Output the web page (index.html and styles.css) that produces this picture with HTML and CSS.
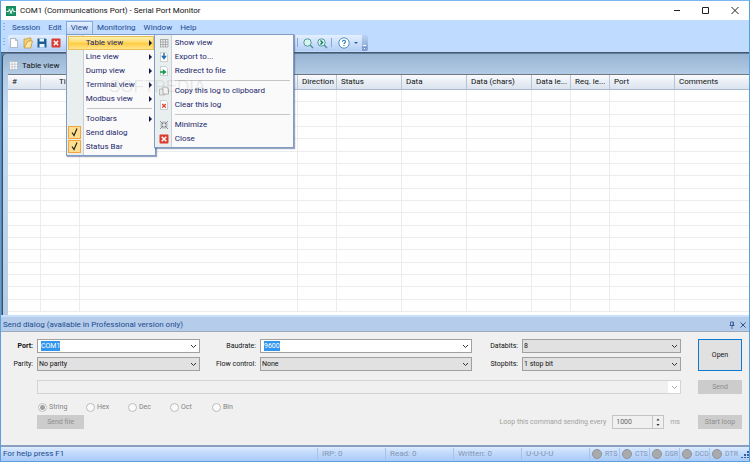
FILE: index.html
```html
<!doctype html>
<html lang="en">
  <head>
    <meta charset="UTF-8" />
    <meta name="viewport" content="width=device-width, initial-scale=1.0" />
    <title>COM1 (Communications Port) - Serial Port Monitor</title>
    <link rel="stylesheet" href="styles.css">
  </head>
  <body>
    <div class="window">
        <header class="titlebar">
            <svg class="app-icon" viewBox="0 0 20 20"><rect width="20" height="20" rx="1" fill="#138a5e"/><path d="M2 5h16M2 10h16M2 15h16M6 2v16M14 2v16" stroke="#3fae83" stroke-width="1"/><path d="M1 11h4l2-5 3 9 3-10 2 6h4" fill="none" stroke="#fff" stroke-width="2"/></svg>
            <h1>COM1 (Communications Port) - Serial Port Monitor</h1>
            <div class="window-buttons">
                <button type="button" aria-label="Minimize window"><svg viewBox="0 0 10 10"><path d="M2 4.500h6" stroke="#222"/></svg></button>
                <button type="button" aria-label="Maximize window"><svg viewBox="0 0 10 10"><path d="M1.500 1.500h6v6h-6z" fill="none" stroke="#222"/></svg></button>
                <button type="button" aria-label="Close window"><svg viewBox="0 0 10 10"><path d="M1.500 1l7 7M8.500 1l-7 7" stroke="#222"/></svg></button>
            </div>
        </header>

        <nav class="menubar">
            <span class="grip"></span>
            <button type="button" class="menu-title">Session</button>
            <button type="button" class="menu-title">Edit</button>
            <div class="menu-open">
                <button type="button" class="menu-title active">View</button>
                <div class="menu view-menu">
                    <div class="menu-row">
                        <button type="button" class="item parent selected">Table view</button>
                        <div class="menu sub-menu">
                            <button type="button" class="item"><svg viewBox="0 0 10 10"><path d="M1.500 1v8M4 1v8M6.500 1v8M9 1v8M1 1.500h8M1 4h8M1 6.500h8M1 9h8" stroke="#9a9a9a" stroke-width=".7"/></svg>Show view</button>
                            <button type="button" class="item"><svg viewBox="0 0 10 10"><path d="M1.500.5h5l2 2v7h-7z" fill="#fff" stroke="#a9b3bd" stroke-width=".6"/><path d="M5 1v4M3.500 4.500l1.500 2 1.500-2z" fill="#1c6fa8" stroke="#1c6fa8" stroke-width="1.400"/></svg>Export to...</button>
                            <button type="button" class="item"><svg viewBox="0 0 10 10"><path d="M1.500.5h5l2 2v7h-7z" fill="#fff" stroke="#a9b3bd" stroke-width=".6"/><path d="M1 6h4M4.500 4.500l2 1.500-2 1.500z" fill="#159a48" stroke="#159a48" stroke-width="1.400"/></svg>Redirect to file</button>
                            <hr>
                            <button type="button" class="item"><svg viewBox="0 0 10 10"><path d="M.5 3h5v6h-5z" fill="#e8e8e8" stroke="#a5a5a5" stroke-width=".7"/><path d="M4 1h3.500L9.500 3v5H4z" fill="#f2f2f2" stroke="#999" stroke-width=".7"/></svg>Copy this log to clipboard</button>
                            <button type="button" class="item"><svg viewBox="0 0 10 10"><path d="M1.500.5h5l2 2v7h-7z" fill="#fff" stroke="#a9b3bd" stroke-width=".6"/><path d="M3.200 4l3.600 3.600M6.800 4L3.200 7.600" stroke="#dd3a2c" stroke-width="1.300"/></svg>Clear this log</button>
                            <hr>
                            <button type="button" class="item"><svg viewBox="0 0 10 10"><path d="M1 1l3 3M9 1L6 4M1 9l3-3M9 9L6 6M4 1.500V4H1.500M6 1.500V4h2.500M4 8.500V6H1.500M6 8.500V6h2.500" fill="none" stroke="#6d747c" stroke-width=".8"/></svg>Minimize</button>
                            <button type="button" class="item"><svg viewBox="0 0 10 10"><rect x=".5" y=".5" width="9" height="9" rx="1" fill="#db3a2e"/><path d="M2.700 2.700l4.600 4.600M7.300 2.700L2.700 7.300" stroke="#fff" stroke-width="1.500"/></svg>Close</button>
                        </div>
                    </div>
                    <button type="button" class="item parent">Line view</button>
                    <button type="button" class="item parent">Dump view</button>
                    <button type="button" class="item parent">Terminal view</button>
                    <button type="button" class="item parent">Modbus view</button>
                    <hr>
                    <button type="button" class="item parent">Toolbars</button>
                    <label class="item"><input type="checkbox" class="tick" checked>Send dialog</label>
                    <label class="item"><input type="checkbox" class="tick" checked>Status Bar</label>
                </div>
            </div>
            <button type="button" class="menu-title">Monitoring</button>
            <button type="button" class="menu-title">Window</button>
            <button type="button" class="menu-title">Help</button>
        </nav>

        <div class="toolbar-area">
            <span class="grip"></span>
            <div class="toolbar">
                <div class="tools">
                    <button type="button" aria-label="New session"><svg viewBox="0 0 12 12"><path d="M2.500 1.500h5l2 2v7h-7z" fill="#fff" stroke="#98a5b3" stroke-width=".7"/><path d="M7.500 1.500v2h2" fill="none" stroke="#98a5b3" stroke-width=".7"/></svg></button>
                    <button type="button" aria-label="Open session"><svg viewBox="0 0 12 12"><path d="M2 2h3l1-1h3v9H2z" fill="#f4d06c" stroke="#c09033" stroke-width=".7"/><path d="M6 4h4.500L8.500 11H2z" fill="#fbe7a4" stroke="#c09033" stroke-width=".7"/></svg></button>
                    <button type="button" aria-label="Save session"><svg viewBox="0 0 12 12"><path d="M1.500 1.500h8l1 1v8h-9z" fill="#1d5f94"/><path d="M3.500 1.500h4.500v3H3.500zM3.500 7h5v3.500h-5z" fill="#e9f4fd"/></svg></button>
                    <button type="button" aria-label="Close session"><svg viewBox="0 0 12 12"><rect x="1.500" y="1.500" width="9" height="9" rx="1" fill="#db3a2e"/><path d="M3.800 3.800l4.400 4.400M8.200 3.800L3.800 8.200" stroke="#fff" stroke-width="1.500"/></svg></button>
                </div>
                <div class="tools">
                    <span class="divider"></span>
                    <button type="button" class="find" aria-label="Find"><svg viewBox="0 0 12 12"><circle cx="5.500" cy="5.500" r="3.700" fill="#d9f3ee" stroke="#559a9c"/><path d="M8.300 8.300L11 11" stroke="#4b8d91" stroke-width="1.300"/></svg></button>
                    <button type="button" aria-label="Find next"><svg viewBox="0 0 12 12"><circle cx="5.500" cy="5.500" r="3.700" fill="#d9f3ee" stroke="#559a9c"/><path d="M8.300 8.300L11 11" stroke="#4b8d91" stroke-width="1.300"/><path d="M4.500 3.500l2 2-2 2" fill="none" stroke="#0d7a62" stroke-width="1.400"/></svg></button>
                    <span class="divider"></span>
                    <button type="button" class="help" aria-label="Help"><svg viewBox="0 0 12 12"><circle cx="6" cy="6" r="5.200" fill="#fff" stroke="#3d87b0" stroke-width=".9"/><path d="M4.500 4.800c0-2 3-2 3 0 0 1-1.500 1-1.500 2.200M6 8v1" fill="none" stroke="#2b7dac" stroke-width="1.100"/></svg></button>
                    <span class="arrow-down"></span>
                </div>
            </div>
            <button type="button" class="overflow" aria-label="Toolbar options"><svg viewBox="0 0 5 16"><path d="M1 10.500h3" stroke="#fff"/><path d="M.5 12.500h4l-2 2z" fill="#fff" stroke="#3a5f96" stroke-width=".5"/></svg></button>
        </div>

        <main class="workspace">
            <section class="view">
                <div class="view-caption">
                    <svg viewBox="0 0 10 10"><rect x=".5" y=".5" width="9" height="9" fill="#fff"/><path d="M.5 0v10M3.500 0v10M6.500 0v10M9.500 0v10M0 .5h10M0 3.500h10M0 6.500h10M0 9.500h10" stroke="#aab4be" stroke-width=".7"/></svg>
                    <h2>Table view</h2>
                </div>
                <div class="table-wrap">
                    <table>
                        <colgroup>
                            <col class="c-num"><col class="c-time"><col class="c-func"><col class="c-dir"><col class="c-text"><col class="c-text"><col class="c-text"><col class="c-len"><col class="c-len"><col class="c-text"><col>
                        </colgroup>
                        <thead>
                            <tr>
                                <th>#</th><th class="right">Time</th><th></th><th>Direction</th><th>Status</th><th>Data</th><th>Data (chars)</th><th>Data le...</th><th>Req. le...</th><th>Port</th><th>Comments</th>
                            </tr>
                        </thead>
                        <tbody id="log"></tbody>
                    </table>
                </div>
            </section>
        </main>

        <section class="send">
            <div class="send-caption">
                <h2>Send dialog (available in Professional version only)</h2>
                <button type="button" aria-label="Pin"><svg viewBox="0 0 8 8"><path d="M2.500 1h3v3.500h-3zM1.500 4.500h5M4 4.500V8M5 1v3" fill="none" stroke="#2d5590" stroke-width=".8"/></svg></button>
                <button type="button" aria-label="Close send dialog"><svg viewBox="0 0 8 8"><path d="M1.500 1.500l5 5M6.500 1.500l-5 5" stroke="#2d5590"/></svg></button>
            </div>
            <form class="send-form">
                <label for="port" class="strong">Port:</label>
                <div class="combo"><input type="text" id="port" value="COM1" size="4"></div>
                <label for="baudrate">Baudrate:</label>
                <div class="combo"><input type="text" id="baudrate" value="9600" size="4"></div>
                <label for="databits">Databits:</label>
                <select id="databits"><option>8</option></select>
                <button type="button" class="button open">Open</button>

                <label for="parity">Parity:</label>
                <select id="parity"><option>No parity</option></select>
                <label for="flow">Flow control:</label>
                <select id="flow"><option>None</option></select>
                <label for="stopbits">Stopbits:</label>
                <select id="stopbits"><option>1 stop bit</option></select>

                <select class="command" aria-label="Command" disabled><option></option></select>
                <button type="button" class="button" disabled>Send</button>

                <div class="formats">
                    <label><input type="radio" name="format" checked disabled>String</label>
                    <label><input type="radio" name="format" disabled>Hex</label>
                    <label><input type="radio" name="format" disabled>Dec</label>
                    <label><input type="radio" name="format" disabled>Oct</label>
                    <label><input type="radio" name="format" disabled>Bin</label>
                </div>

                <div class="loop">
                    <button type="button" class="button send-file" disabled>Send file</button>
                    <label for="interval">Loop this command sending every</label>
                    <div class="spinner">
                        <input type="text" id="interval" value="1000" size="4" disabled>
                        <svg viewBox="0 0 10 12"><path d="M3.500 4.500L5 2.500l1.500 2zM3.500 8L5 10l1.500-2z" fill="#333"/></svg>
                    </div>
                    <span class="unit">ms</span>
                </div>
                <button type="button" class="button start-loop" disabled>Start loop</button>
            </form>
        </section>

        <footer class="statusbar">
            <span class="hint">For help press F1</span>
            <span class="cell">IRP: 0</span>
            <span class="cell">Read: 0</span>
            <span class="cell">Written: 0</span>
            <span class="cell">U-U-U-U</span>
            <span class="led">RTS</span>
            <span class="led">CTS</span>
            <span class="led">DSR</span>
            <span class="led">DCD</span>
            <span class="led">DTR</span>
            <svg class="size-grip" viewBox="0 0 8 8"><path d="M6 1h2v2H6zM3 4h2v2H3zM6 4h2v2H6zM0 7h2v1H0zM3 7h2v1H3zM6 7h2v1H6z" fill="#35629f"/></svg>
        </footer>

        <div class="watermark">SOFTPEDIA</div>
    </div>

    <script>
        const log = document.querySelector( '#log' );
        const rowCount = 18;
        const columnCount = 11;

        // The log is empty, so only blank grid rows are added.
        for ( let i = 0; i < rowCount; i++ ) {
            const row = log.insertRow();

            for ( let j = 0; j < columnCount; j++ ) {
                row.insertCell();
            }
        }
    </script>
  </body>
</html>
```
FILE: styles.css
```css
* {
    box-sizing: border-box;
    margin: 0;
    padding: 0;
}

body {
    font-family: Roboto, "Open Sans", sans-serif;
    font-size: 8px;
    line-height: 12px;
    color: #111;
}

button,
input,
select {
    font: inherit;
    color: inherit;
    border: none;
    background: none;
}

h1,
h2 {
    font-size: 8px;
    font-weight: 400;
}

svg {
    display: block;
    flex: none;
}

.window {
    position: relative;
    display: flex;
    flex-direction: column;
    min-height: 100vh;
    border: 1px solid #5a9fe0;
    border-top-color: #79b6f2;
    background: #bfdbff;
}

/* title bar */
.titlebar {
    display: flex;
    align-items: center;
    height: 19px;
    padding: 0 2px 0 5px;
    background: #fff;
}

.app-icon {
    width: 10px;
    height: 10px;
    margin-right: 4px;
}

.titlebar h1 {
    flex: 1;
}

.window-buttons {
    display: flex;
    gap: 19px;
    padding-right: 7px;
}

.window-buttons svg {
    width: 10px;
    height: 10px;
}

/* menus */
.menubar {
    display: flex;
    align-items: center;
    height: 15px;
}

.grip {
    width: 2px;
    height: 9px;
    margin: 0 3px 0 2px;
    background: repeating-linear-gradient(#8fb3e0 0 1px, transparent 1px 3px);
}

.menu-title {
    display: block;
    height: 14px;
    padding: 0 4px;
    color: #1d4a8f;
}

.menu-title.active {
    border: 1px solid #8aa9d4;
    border-bottom: none;
    background: linear-gradient(#e2eeff, #bdd5f7);
}

.menu-open {
    position: relative;
}

.menu {
    position: absolute;
    z-index: 2;
    padding: 1px;
    border: 1px solid #7f9cc8;
    background: linear-gradient(90deg, #e9eeee 16px, #c9ced4 16px 17px, #fafafa 17px);
    box-shadow: 1px 1px 1px rgba(60, 80, 120, 0.5);
}

.view-menu {
    top: 100%;
    left: 0;
    width: 90px;
    margin-top: -1px;
}

.sub-menu {
    top: -2px;
    left: 86px;
    width: 140px;
}

.menu-row {
    position: relative;
}

.menu hr {
    height: 1px;
    margin: 2px 2px 3px 19px;
    border: none;
    background: #c5c5c5;
}

.item {
    display: flex;
    align-items: center;
    width: 100%;
    height: 14px;
    padding-left: 18px;
    color: #1a1f6b;
}

.item svg {
    width: 10px;
    height: 10px;
    margin: 0 6px 0 -15px;
}

.parent::after {
    content: "";
    margin: 0 2px 0 auto;
    border: 3px solid transparent;
    border-left-color: #111a4d;
    border-right: none;
}

.item.selected {
    background: linear-gradient(#fff3bf, #ffdc6b 45%, #ffcb3d 50%, #ffe79a);
    box-shadow: inset 0 0 0 1px #e8bf55;
}

.tick {
    appearance: none;
    width: 13px;
    height: 13px;
    margin: 0 5px 0 -18px;
    border: 1px solid #f0a63c;
    background: #ffdf8f url("data:image/svg+xml,%3Csvg xmlns='http://www.w3.org/2000/svg' viewBox='0 0 11 11'%3E%3Cpath d='M3 5.500l2 3 3-7' fill='none' stroke='%23222' stroke-width='1.200'/%3E%3C/svg%3E");
}

/* toolbar */
.toolbar-area {
    display: flex;
    align-items: center;
    height: 18px;
    padding-bottom: 2px;
    border-bottom: 1px solid #4b5666;
}

.toolbar {
    display: flex;
    justify-content: space-between;
    width: 354px;
    height: 16px;
    border-radius: 2px 0 0 2px;
    background: linear-gradient(#e3efff, #c6dcfa 60%, #b3cdf3);
}

.tools {
    display: flex;
    align-items: center;
    gap: 2px;
}

.tools svg {
    width: 12px;
    height: 12px;
}

.divider {
    width: 1px;
    height: 9px;
    margin: 0 1px;
    background: #86a8d8;
}

.find {
    margin-left: 1px;
}

.help {
    margin-left: 3px;
}

.arrow-down {
    margin: 0 4px 0 2px;
    border: 2px solid transparent;
    border-top-color: #2b5a9c;
    border-bottom: none;
}

.overflow {
    width: 6px;
    height: 16px;
    border-radius: 0 2px 2px 0;
    background: linear-gradient(#bdd3f4, #7c9ed0);
}

.overflow svg {
    width: 5px;
    height: 16px;
}

/* table view */
.workspace {
    display: flex;
    flex: 1;
    padding-left: 1px;
    background: #5c7f9f;
}

.view {
    display: flex;
    flex: 1;
    flex-direction: column;
    margin-top: 1px;
    padding-left: 5px;
    border-left: 1px solid #35506b;
    border-radius: 4px 0 0 0;
    background: linear-gradient(#98b4d2, #b2cbe6 20px, #c8dcf2 60px, #b7cce2);
}

.view-caption {
    display: flex;
    align-items: center;
    height: 21px;
    padding: 3px 0 0 1px;
    border-bottom: 1px solid #70767e;
}

.view-caption svg {
    width: 9px;
    height: 9px;
    margin-right: 4px;
}

.table-wrap {
    display: flex;
    flex: 1;
    padding-bottom: 3px;
    background: #fff;
}

table {
    width: 100%;
    table-layout: fixed;
    border-collapse: separate;
    border-spacing: 0;
}

.c-num { width: 33px; }
.c-time { width: 39px; }
.c-func { width: 218px; }
.c-dir { width: 39px; }
.c-text { width: 65px; }
.c-len { width: 39px; }

th {
    height: 15px;
    padding: 0 2px 0 4px;
    border-right: 1px solid #b9c4d2;
    border-bottom: 1px solid #a9bace;
    background: linear-gradient(#fafbfd, #e9eef5 50%, #dbe3ee);
    line-height: 12px;
    font-weight: 400;
    text-align: left;
    white-space: nowrap;
}

th:last-child,
td:last-child {
    border-right: none;
}

.right {
    text-align: right;
}

td {
    height: 12px;
    border-right: 1px solid #ececec;
    border-bottom: 1px solid #ececec;
}

/* send dialog */
.send-caption {
    display: flex;
    align-items: center;
    gap: 3px;
    height: 17px;
    padding: 2px 2px 1px;
    border-top: 2px solid #c9defa;
    border-bottom: 1px solid #9aa9bd;
    background: #b5cdea;
}

.send-caption h2 {
    flex: 1;
    color: #1d4a8f;
}

.send-caption svg {
    width: 8px;
    height: 8px;
}

.send-form {
    display: grid;
    grid-template-columns: 25px 163fr 52px 212fr 42px 159fr 57px;
    grid-template-rows: 18px 18px 28px 12px 18px;
    column-gap: 4px;
    align-items: center;
    padding: 5px 7px 14px;
    border-bottom: 2px solid #8a9fbd;
    background: #f0f0f0;
    font-size: 7px;
}

.send-form > label {
    text-align: right;
    white-space: nowrap;
}

.strong {
    font-weight: 700;
}

.combo,
select {
    width: 100%;
    height: 14px;
    border: 1px solid #a0a0a0;
    background: #e1e1e1 url("data:image/svg+xml,%3Csvg xmlns='http://www.w3.org/2000/svg' width='7' height='5'%3E%3Cpath d='M1 1l2.500 2.500L6 1' fill='none' stroke='%23333'/%3E%3C/svg%3E") no-repeat right 2px center;
}

.combo {
    display: flex;
    align-items: center;
    padding-left: 3px;
    background-color: #fff;
}

.combo input {
    field-sizing: content;
    height: 10px;
    background: #3096ee;
    color: #fff;
    line-height: 10px;
}

select {
    appearance: none;
    padding-left: 1px;
}

.command {
    grid-column: 2 / 7;
    border-color: #d4d4d4;
    opacity: 1;
    background:
        url("data:image/svg+xml,%3Csvg xmlns='http://www.w3.org/2000/svg' width='7' height='5'%3E%3Cpath d='M1 1l2.500 2.500L6 1' fill='none' stroke='%23aaa'/%3E%3C/svg%3E") no-repeat right 2px center,
        linear-gradient(#fff, #fff) no-repeat right / 12px 100%,
        #f0f0f0;
}

.button {
    justify-self: end;
    width: 44px;
    height: 14px;
    background: #e1e1e1;
    white-space: nowrap;
}

.button:disabled {
    background: #cccccc;
    color: #8d8d8d;
}

.open {
    grid-row: 1 / 3;
    grid-column: 7;
    height: 32px;
    border: 1px solid #0f78d0;
}

.formats {
    display: flex;
    grid-column: 2 / 8;
    color: #838383;
}

.formats label {
    display: flex;
    align-items: center;
    min-width: 42px;
}

.formats label:first-child {
    min-width: 48px;
}

.formats input {
    appearance: none;
    width: 9px;
    height: 9px;
    margin: 0 2px 0 1px;
    border: 1px solid #bcbcbc;
    border-radius: 50%;
    background: #fafafa;
}

.formats input:checked {
    background: radial-gradient(#a0a0a0 2px, #fafafa 3px);
}

.loop {
    display: flex;
    grid-column: 2 / 7;
    align-items: center;
    color: #a0a0a0;
}

.loop label {
    margin: 0 6px 0 auto;
}

.send-file {
    width: 47px;
}

.spinner {
    display: flex;
    align-items: center;
    justify-content: space-between;
    width: 52px;
    height: 14px;
    padding-left: 3px;
    border: 1px solid #c4c4c4;
    color: #666;
}

.spinner input {
    width: 30px;
}

.spinner svg {
    width: 11px;
    height: 12px;
    border-left: 1px solid #c4c4c4;
}

.unit {
    margin: 0 1px 0 6px;
}

.start-loop {
    grid-column: 7;
}

/* status bar */
.statusbar {
    display: flex;
    align-items: center;
    height: 14px;
    background: linear-gradient(#dcebff, #c4dbfb 40%, #a9caf7);
    color: #8296b5;
    white-space: nowrap;
}

.hint {
    flex: 1;
    padding-left: 2px;
    color: #1d4a8f;
}

.cell {
    width: 68px;
    padding-left: 4px;
    border-left: 1px solid #a9c2e6;
}

.led {
    display: flex;
    align-items: center;
    width: 30px;
    border-left: 1px solid #a9c2e6;
    font-size: 7px;
}

.led::before {
    content: "";
    flex: none;
    width: 8px;
    height: 8px;
    margin: 0 3px 0 2px;
    border: 1px solid #8f939a;
    border-radius: 50%;
    background: #a9aaac;
}

.size-grip {
    width: 8px;
    height: 8px;
    margin-left: 2px;
}

.watermark {
    position: absolute;
    z-index: 3;
    top: 76px;
    left: 108px;
    font: 17px/20px "Liberation Sans", sans-serif;
    color: rgba(120, 125, 135, 0.16);
    pointer-events: none;
}
```
